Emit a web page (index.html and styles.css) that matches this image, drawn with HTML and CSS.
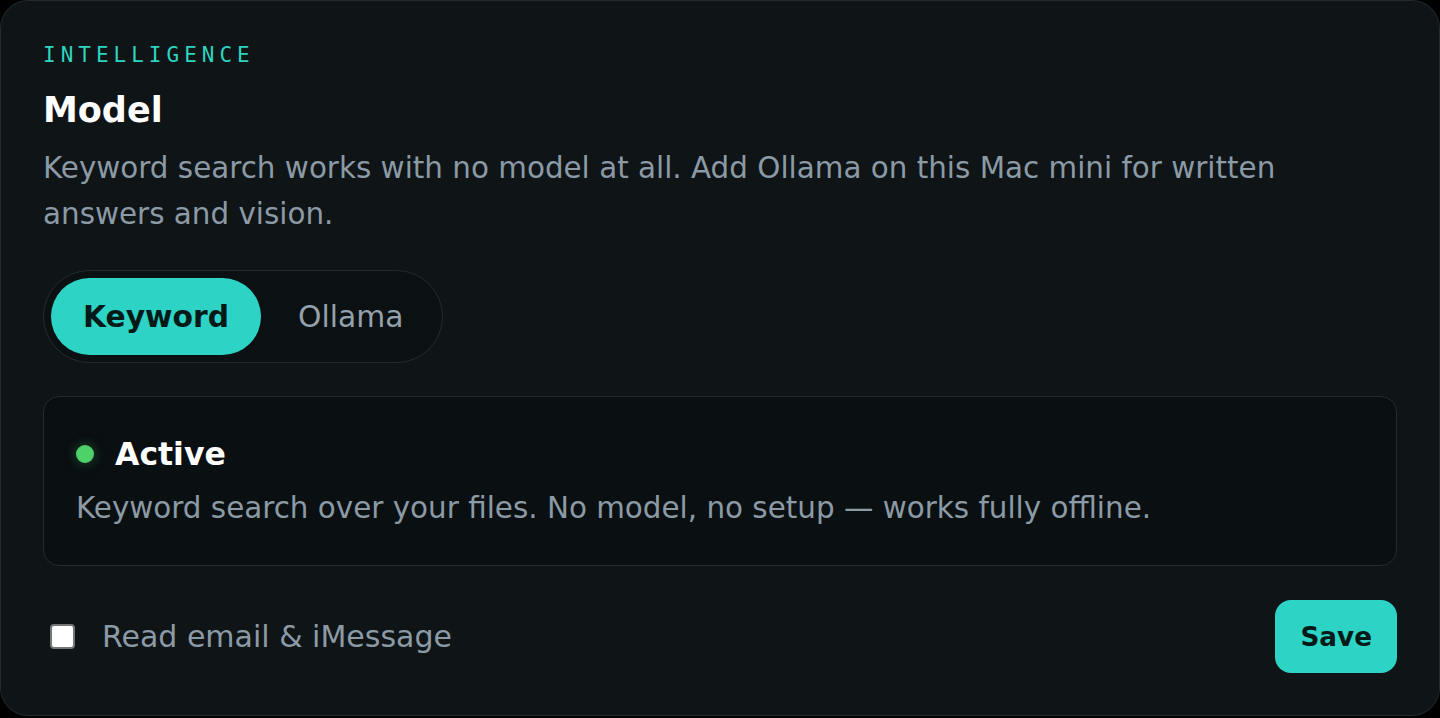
FILE: index.html
```html
<!DOCTYPE html>
<html>
<head>
<meta charset="UTF-8">
<title>Model</title>

<link rel="stylesheet" href="styles.css">

</head>
<body>
	<!-- settings card -->
	<section class="card">
		<div class="eyebrow">INTELLIGENCE</div>
		<h2 class="title">Model</h2>
		<p class="desc">Keyword search works with no model at all. Add Ollama on this Mac mini for written answers and vision.</p>

		<div class="toggle">
			<button class="toggle-btn active">Keyword</button>
			<button class="toggle-btn">Ollama</button>
		</div>

		<div class="status">
			<div class="status-head">
				<span class="dot"></span>
				<span class="status-title">Active</span>
			</div>
			<p class="status-text">Keyword search over your files. No model, no setup — works fully offline.</p>
		</div>

		<div class="footer">
			<label class="check">
				<input type="checkbox" class="box">
				<span>Read email &amp; iMessage</span>
			</label>
			<button class="save">Save</button>
		</div>
	</section>
</body>
</html>
```

FILE: styles.css
```css
body {
	margin: 0;
	background: #000;
	font-family: "DejaVu Sans", "Liberation Sans", sans-serif;
	color: #8b9aa5;
}

.card {
	background: #0f1417;
	border: 1px solid #222b30;
	border-radius: 28px;
	padding: 42px;
}

.eyebrow {
	font-family: "DejaVu Sans Mono", monospace;
	font-size: 21px;
	line-height: 24px;
	letter-spacing: 5px;
	color: #2dd4bf;
	margin-bottom: 22px;
}

.title {
	margin: 0 0 14px 0;
	font-size: 35px;
	line-height: 42px;
	font-weight: bold;
	color: #fff;
}

.desc {
	margin: 0 0 33px 0;
	font-size: 29.4px;
	line-height: 46px;
	max-width: 1300px;
}

/* segmented switch */
.toggle {
	display: inline-flex;
	gap: 5px;
	padding: 7px;
	border: 1px solid #232c31;
	border-radius: 999px;
	background: #0b1013;
	margin-bottom: 33px;
}

.toggle-btn {
	height: 77px;
	padding: 0 32px;
	border: none;
	border-radius: 999px;
	background: none;
	font-family: inherit;
	font-size: 29.75px;
	color: #93a1ab;
}

.toggle-btn.active {
	background: #2dd4c5;
	color: #041a18;
	font-weight: bold;
}

.status {
	background: #0a0f12;
	border: 1px solid #222b30;
	border-radius: 16px;
	padding: 32px 32px 34px;
	margin-bottom: 34px;
}

.status-head {
	display: flex;
	align-items: center;
	gap: 21px;
	height: 50px;
}

.dot {
	width: 18px;
	height: 18px;
	border-radius: 50%;
	background: #4fd16a;
	box-shadow: 0 0 12px rgba(79, 209, 106, 0.35);
}

.status-title {
	font-size: 31.5px;
	font-weight: bold;
	color: #fff;
}

.status-text {
	margin: 6px 0 0 0;
	font-size: 29.4px;
	line-height: 46px;
}

.footer {
	display: flex;
	align-items: center;
	justify-content: space-between;
}

.check {
	display: flex;
	align-items: center;
	gap: 27px;
	font-size: 30px;
}

.box {
	appearance: none;
	width: 25px;
	height: 25px;
	margin: 0 0 0 7px;
	background: #fff;
	border: 2px solid #767676;
	border-radius: 4px;
}

.save {
	height: 73px;
	padding: 0 25px;
	border: none;
	border-radius: 16px;
	background: #2dd4c5;
	color: #041a18;
	font-family: inherit;
	font-size: 26.25px;
	font-weight: bold;
}
```
